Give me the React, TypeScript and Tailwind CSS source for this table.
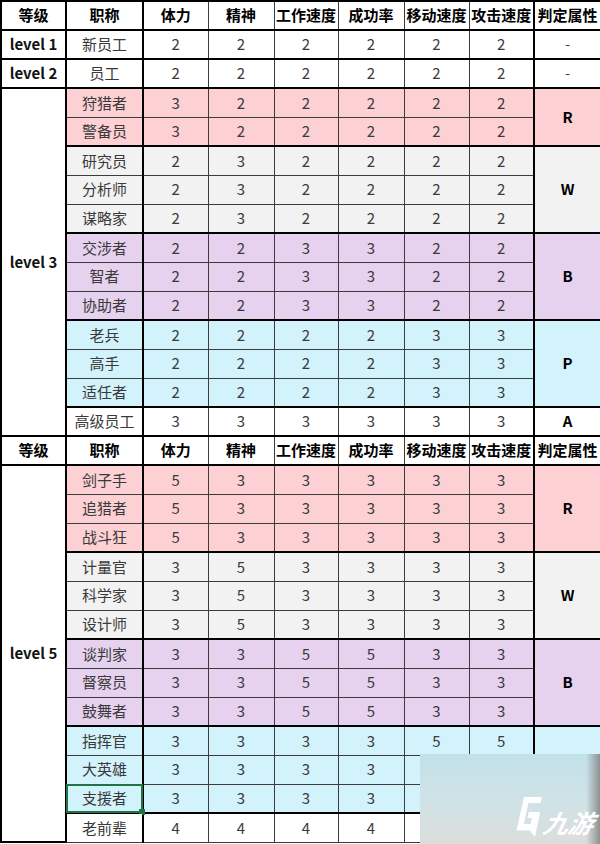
import React from 'react';

type Tone = 'white' | 'pink' | 'gray' | 'purple' | 'blue';

type Row = { name: string; vals: number[]; selected?: boolean };
type Group = { tone: Tone; attr: string; rows: Row[] };
type Section = { level: string; groups: Group[] };

const toneBg: Record<Tone, string> = {
  white: 'bg-white',
  pink: 'bg-[#fdd0d4]',
  gray: 'bg-[#f2f2f2]',
  purple: 'bg-[#e6d2ee]',
  blue: 'bg-[#d2f2fc]',
};

const headers = ['等级', '职称', '体力', '精神', '工作速度', '成功率', '移动速度', '攻击速度', '判定属性'];
const widths = ['w-[65px]', 'w-[77px]', 'w-[65px]', 'w-[66px]', 'w-[64px]', 'w-[66px]', 'w-[65px]', 'w-[65px]', 'w-[67px]'];

const first: Section[] = [
  { level: 'level 1', groups: [{ tone: 'white', attr: '-', rows: [{ name: '新员工', vals: [2, 2, 2, 2, 2, 2] }] }] },
  { level: 'level 2', groups: [{ tone: 'white', attr: '-', rows: [{ name: '员工', vals: [2, 2, 2, 2, 2, 2] }] }] },
  {
    level: 'level 3',
    groups: [
      {
        tone: 'pink',
        attr: 'R',
        rows: [
          { name: '狩猎者', vals: [3, 2, 2, 2, 2, 2] },
          { name: '警备员', vals: [3, 2, 2, 2, 2, 2] },
        ],
      },
      {
        tone: 'gray',
        attr: 'W',
        rows: [
          { name: '研究员', vals: [2, 3, 2, 2, 2, 2] },
          { name: '分析师', vals: [2, 3, 2, 2, 2, 2] },
          { name: '谋略家', vals: [2, 3, 2, 2, 2, 2] },
        ],
      },
      {
        tone: 'purple',
        attr: 'B',
        rows: [
          { name: '交涉者', vals: [2, 2, 3, 3, 2, 2] },
          { name: '智者', vals: [2, 2, 3, 3, 2, 2] },
          { name: '协助者', vals: [2, 2, 3, 3, 2, 2] },
        ],
      },
      {
        tone: 'blue',
        attr: 'P',
        rows: [
          { name: '老兵', vals: [2, 2, 2, 2, 3, 3] },
          { name: '高手', vals: [2, 2, 2, 2, 3, 3] },
          { name: '适任者', vals: [2, 2, 2, 2, 3, 3] },
        ],
      },
      { tone: 'white', attr: 'A', rows: [{ name: '高级员工', vals: [3, 3, 3, 3, 3, 3] }] },
    ],
  },
];

const second: Section[] = [
  {
    level: 'level 5',
    groups: [
      {
        tone: 'pink',
        attr: 'R',
        rows: [
          { name: '剑子手', vals: [5, 3, 3, 3, 3, 3] },
          { name: '追猎者', vals: [5, 3, 3, 3, 3, 3] },
          { name: '战斗狂', vals: [5, 3, 3, 3, 3, 3] },
        ],
      },
      {
        tone: 'gray',
        attr: 'W',
        rows: [
          { name: '计量官', vals: [3, 5, 3, 3, 3, 3] },
          { name: '科学家', vals: [3, 5, 3, 3, 3, 3] },
          { name: '设计师', vals: [3, 5, 3, 3, 3, 3] },
        ],
      },
      {
        tone: 'purple',
        attr: 'B',
        rows: [
          { name: '谈判家', vals: [3, 3, 5, 5, 3, 3] },
          { name: '督察员', vals: [3, 3, 5, 5, 3, 3] },
          { name: '鼓舞者', vals: [3, 3, 5, 5, 3, 3] },
        ],
      },
      {
        tone: 'blue',
        attr: 'P',
        rows: [
          { name: '指挥官', vals: [3, 3, 3, 3, 5, 5] },
          { name: '大英雄', vals: [3, 3, 3, 3, 5, 5] },
          { name: '支援者', vals: [3, 3, 3, 3, 5, 5], selected: true },
        ],
      },
      { tone: 'white', attr: 'A', rows: [{ name: '老前辈', vals: [4, 4, 4, 4, 4, 4] }] },
    ],
  },
];

const thin = 'border border-[#3c3c3c]';

function HeaderRow() {
  return (
    <tr className="h-[29px]">
      {headers.map((h, i) => (
        <td
          key={h}
          className={`${thin} border-t-2 border-b-2 border-t-black border-b-black ${
            i === 0 || i === 1 || i === 7 || i === 8 ? 'border-r-2 border-r-black' : ''
          } ${i === 0 ? 'border-l-2 border-l-black' : ''} text-center text-[15px] font-bold text-black`}
        >
          {h}
        </td>
      ))}
    </tr>
  );
}

function SectionRows({ section }: { section: Section }) {
  const total = section.groups.reduce((n, g) => n + g.rows.length, 0);
  return (
    <>
      {section.groups.map((g, gi) =>
        g.rows.map((r, ri) => {
          const top = ri === 0 ? 'border-t-2 border-t-black' : '';
          const bg = toneBg[g.tone];
          return (
            <tr key={r.name} className="h-[29px]">
              {gi === 0 && ri === 0 && (
                <td
                  rowSpan={total}
                  className={`${thin} border-2 border-black bg-white text-center text-[15px] font-bold text-[#111]`}
                >
                  {section.level}
                </td>
              )}
              <td className={`${thin} ${top} border-r-2 border-r-black ${bg} relative text-center text-[15px] text-[#3a3a3a]`}>
                {r.name}
                {r.selected && (
                  <div className="pointer-events-none absolute -inset-[1px] border-2 border-[#217346]">
                    <div className="absolute -right-[4px] -bottom-[4px] h-[6px] w-[6px] bg-[#217346]" />
                  </div>
                )}
              </td>
              {r.vals.map((v, vi) => (
                <td
                  key={vi}
                  className={`${thin} ${top} ${vi === 5 ? 'border-r-2 border-r-black' : ''} ${bg} text-center text-[15px] text-[#3a3a3a]`}
                >
                  {v}
                </td>
              ))}
              {ri === 0 && (
                <td
                  rowSpan={g.rows.length}
                  className={`${thin} border-2 border-black ${bg} text-center text-[15px] font-bold ${
                    g.attr === '-' ? 'text-[#444] font-normal' : 'text-black'
                  }`}
                >
                  {g.attr}
                </td>
              )}
            </tr>
          );
        })
      )}
    </>
  );
}

function Watermark() {
  return (
    <div className="pointer-events-none absolute right-0 bottom-0 h-[90px] w-[180px] overflow-hidden bg-linear-to-b from-[#c1e1e8] via-[#cfe3e7] to-[#dcdddc]">
      <div className="absolute top-0 right-0 h-full w-[14px] bg-linear-to-r from-transparent to-[#8d9191]" />
      <div className="absolute right-[6px] bottom-[6px] flex items-end gap-[2px]">
        <svg width="27" height="40" viewBox="0 0 27 40" className="mb-[1px]">
          <path
            d="M9 0 H27 L25.5 6 H13.5 L8.8 27 H15.5 L17 21 H12.4 L13.8 15 H25.2 L20 40 L14.5 33.5 H1.5 Z"
            fill="#ffffff"
          />
        </svg>
        <span className="font-['Noto_Sans_CJK_SC',sans-serif] text-[25px] leading-none font-bold italic text-white -skew-x-12 mb-[3px]">
          九游
        </span>
      </div>
    </div>
  );
}

export default function App() {
  return (
    <div className="relative h-[844px] w-[600px] overflow-hidden bg-white font-['Liberation_Sans_Narrow','Noto_Sans_CJK_SC',sans-serif]">
      <table className="w-[600px] table-fixed border-collapse">
        <colgroup>
          {widths.map((w, i) => (
            <col key={i} className={w} />
          ))}
        </colgroup>
        <tbody>
          <HeaderRow />
          {first.map((s) => (
            <SectionRows key={s.level} section={s} />
          ))}
          <HeaderRow />
          {second.map((s) => (
            <SectionRows key={s.level} section={s} />
          ))}
        </tbody>
      </table>
      <Watermark />
    </div>
  );
}
